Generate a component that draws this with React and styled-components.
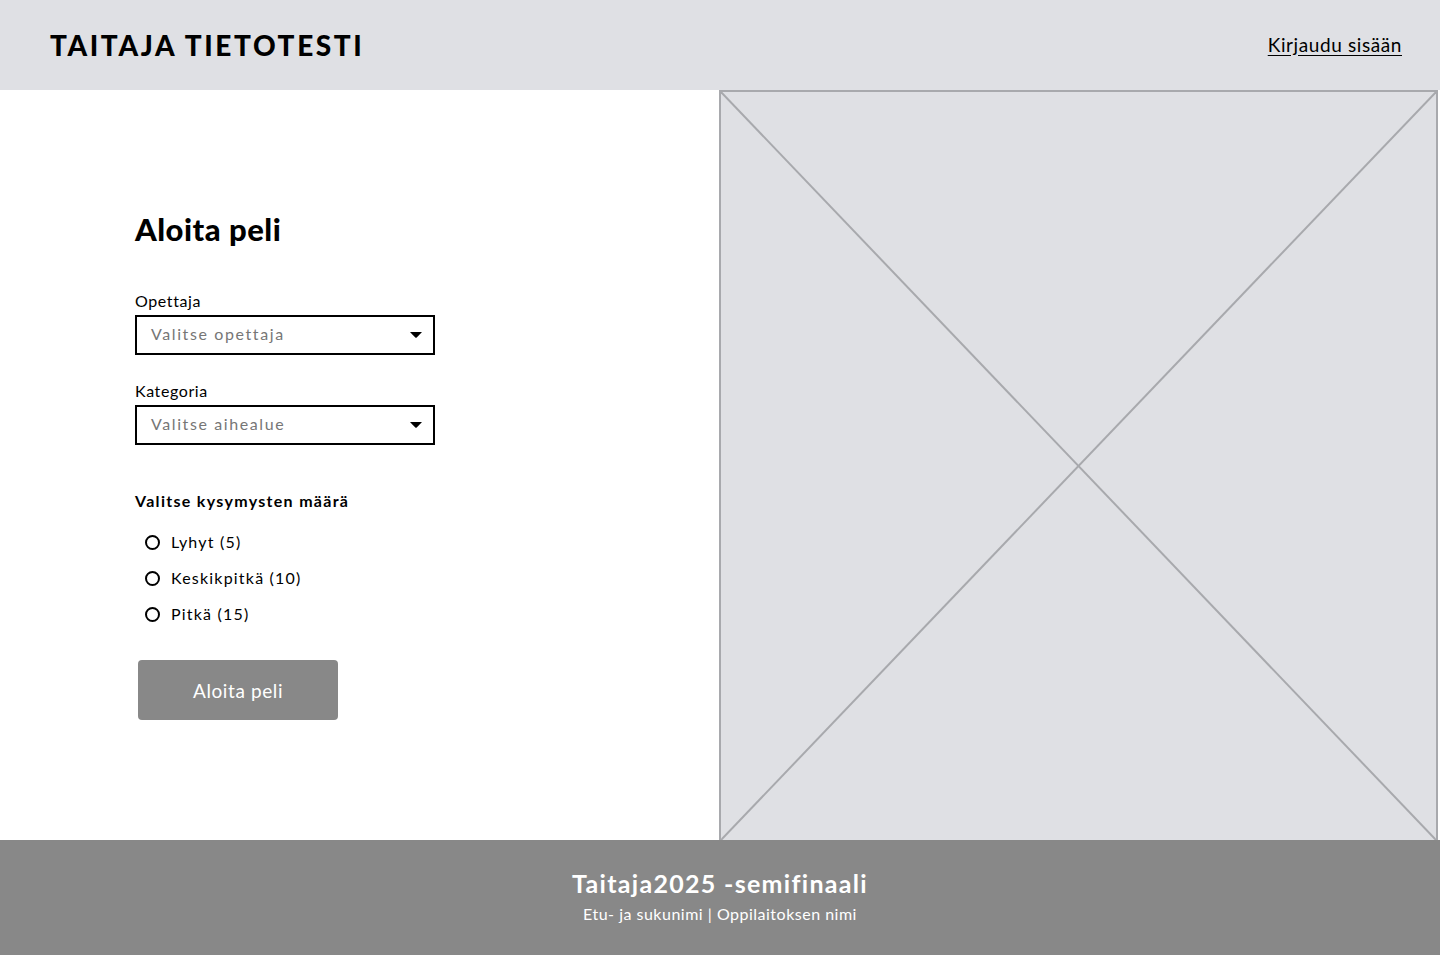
import React from "react";
import styled, { createGlobalStyle } from "styled-components";

const GlobalStyle = createGlobalStyle`
    html, body {
        margin: 0;
        padding: 0;
        background: #fff;
    }
    body {
        font-family: "Lato", "Noto Sans", sans-serif;
        color: #000;
    }
`;

const Page = styled.div`
    width: 1440px;
    height: 955px;
    display: flex;
    flex-direction: column;
`;

const Header = styled.header`
    height: 90px;
    flex-shrink: 0;
    background: #dfe0e4;
    display: flex;
    align-items: center;
    justify-content: space-between;
    padding: 0 38px 0 50px;
    box-sizing: border-box;
`;

const Logo = styled.h1`
    margin: 0;
    font-size: 28px;
    font-weight: 900;
    letter-spacing: 2.6px;
`;

const LoginLink = styled.a`
    font-size: 19px;
    color: #000;
    text-decoration: underline;
    text-underline-offset: 3px;
    letter-spacing: 0.6px;
    margin-top: -2px;
    cursor: pointer;
`;

const Main = styled.main`
    flex: 1;
    min-height: 0;
    display: grid;
    grid-template-columns: 719px 1fr;
`;

const FormSide = styled.section`
    padding: 120px 0 0 135px;
`;

const Title = styled.h2`
    margin: 0 0 43px;
    font-size: 31px;
    font-weight: 900;
    line-height: 38px;
    letter-spacing: 0.5px;
`;

const Field = styled.div`
    display: flex;
    flex-direction: column;
    gap: 4px;
    margin-bottom: ${p => p.$gap || 0}px;
`;

const Label = styled.label`
    font-size: 16px;
    letter-spacing: 0.6px;
    line-height: 20px;
`;

const Select = styled.div`
    width: 300px;
    height: 40px;
    box-sizing: border-box;
    border: 2px solid #000;
    display: flex;
    align-items: center;
    justify-content: space-between;
    padding: 0 11px 3px 14px;
    color: #767676;
    font-size: 16px;
    letter-spacing: 1.6px;
    svg {
        margin-top: 3px;
    }
`;

const GroupTitle = styled.div`
    font-size: 16px;
    font-weight: 700;
    letter-spacing: 1.3px;
    line-height: 20px;
    margin: 46px 0 21px;
`;

const RadioList = styled.div`
    display: flex;
    flex-direction: column;
    gap: 16px;
    padding-left: 10px;
`;

const RadioRow = styled.label`
    display: flex;
    align-items: center;
    gap: 11px;
    font-size: 16px;
    letter-spacing: 1.2px;
    line-height: 20px;
`;

const RadioDot = styled.span`
    width: 15px;
    height: 15px;
    box-sizing: border-box;
    border: 2px solid #000;
    border-radius: 50%;
`;

const StartButton = styled.button`
    margin: 36px 0 0 3px;
    width: 200px;
    height: 60px;
    border: none;
    border-radius: 4px;
    background: #888888;
    color: #fff;
    font-family: inherit;
    font-size: 19px;
    letter-spacing: 0.6px;
    cursor: pointer;
`;

const ImageBox = styled.div`
    margin-right: 2px;
    background: #dfe0e4;
    border: 2px solid #a8a9ad;
    border-bottom: none;
    box-sizing: border-box;
    svg {
        display: block;
        width: 100%;
        height: 100%;
    }
`;

const Footer = styled.footer`
    height: 115px;
    flex-shrink: 0;
    background: #888888;
    color: #fff;
    display: flex;
    flex-direction: column;
    align-items: center;
    padding-top: 28px;
    box-sizing: border-box;
`;

const FooterTitle = styled.div`
    font-size: 25px;
    font-weight: 700;
    letter-spacing: 1.3px;
    line-height: 30px;
`;

const FooterSub = styled.div`
    font-size: 16px;
    letter-spacing: 0.5px;
    margin-top: 6px;
`;

function Caret(){
    return(
        <svg width="12" height="6" viewBox="0 0 12 6">
            <path d="M0.6 0 H11.4 Q12 0 11.6 0.5 L6.7 5.5 Q6 6 5.3 5.5 L0.4 0.5 Q0 0 0.6 0 Z" fill="#000"/>
        </svg>
    );
}

const options = ["Lyhyt (5)", "Keskikpitkä (10)", "Pitkä (15)"];

export default function App(){
    return(
        <Page>
            <GlobalStyle/>
            <Header>
                <Logo>TAITAJA TIETOTESTI</Logo>
                <LoginLink>Kirjaudu sisään</LoginLink>
            </Header>
            <Main>
                <FormSide>
                    <Title>Aloita peli</Title>
                    <Field $gap={26}>
                        <Label>Opettaja</Label>
                        <Select>Valitse opettaja<Caret/></Select>
                    </Field>
                    <Field>
                        <Label>Kategoria</Label>
                        <Select>Valitse aihealue<Caret/></Select>
                    </Field>
                    <GroupTitle>Valitse kysymysten määrä</GroupTitle>
                    <RadioList>
                        {options.map(o => (
                            <RadioRow key={o}><RadioDot/>{o}</RadioRow>
                        ))}
                    </RadioList>
                    <StartButton>Aloita peli</StartButton>
                </FormSide>
                <ImageBox>
                    <svg viewBox="0 0 100 100" preserveAspectRatio="none">
                        <line x1="0" y1="0" x2="100" y2="100" stroke="#a8a9ad" strokeWidth="2" vectorEffect="non-scaling-stroke"/>
                        <line x1="100" y1="0" x2="0" y2="100" stroke="#a8a9ad" strokeWidth="2" vectorEffect="non-scaling-stroke"/>
                    </svg>
                </ImageBox>
            </Main>
            <Footer>
                <FooterTitle>Taitaja2025 -semifinaali</FooterTitle>
                <FooterSub>Etu- ja sukunimi | Oppilaitoksen nimi</FooterSub>
            </Footer>
        </Page>
    );
}
